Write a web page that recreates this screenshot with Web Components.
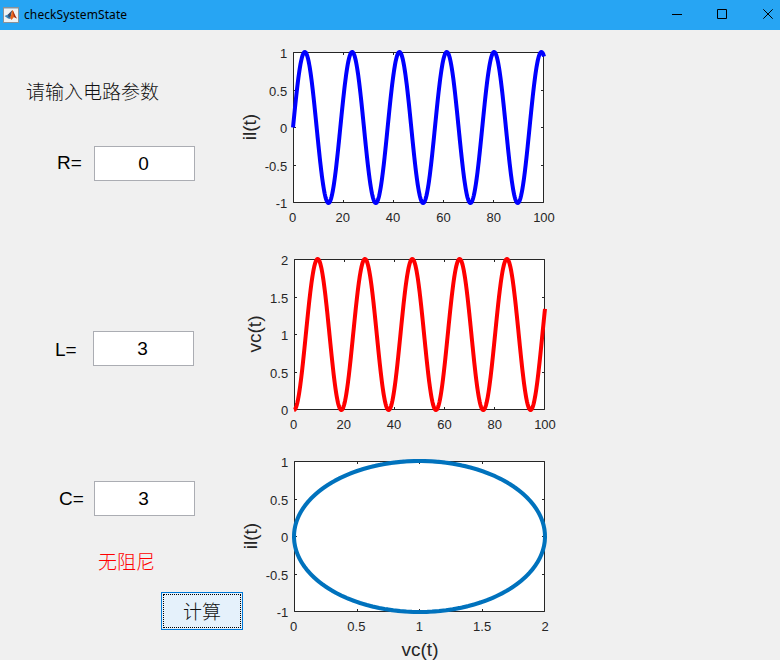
<!DOCTYPE html>
<html lang="zh-CN">
<head>
<meta charset="utf-8">
<title>checkSystemState</title>
<style>
html,body{margin:0;height:100%;overflow:hidden;background:#f0f0f0}
body{font-family:"Liberation Sans","Noto Sans CJK SC",sans-serif;color:#000}
</style>
</head>
<body>
<app-window></app-window>
<script>
class TitleBar extends HTMLElement {
  constructor() {
    super();
    this.attachShadow({mode:'open'}).innerHTML = `
    <style>
      :host{display:flex;align-items:center;height:30px;background:#27a5f3;box-sizing:border-box;padding:0 7px 0 3px}
      .name{font:12px/18px "Noto Sans",sans-serif;letter-spacing:.1px;margin-left:5px;flex:1;white-space:nowrap}
      .buttons{display:flex;gap:35px;margin-top:-2px}
      .buttons svg:last-child{margin-left:1px}
      svg{display:block}
    </style>
    <svg width="16" height="16" viewBox="0 0 16 16" style="margin-top:-1px">
      <rect x=".5" y=".5" width="15" height="15" fill="#f0f2f4" stroke="#8a9298"/>
      <path d="M1 1.500h14" stroke="#b9c4cc"/>
      <path d="M1.500 9l3.500-1.500 2-1 2 4-2 1.500-2-.5z" fill="#3b86bd"/>
      <path d="M5 7.500L9.400 3l-1.600 6-2 2z" fill="#3d4a66"/>
      <path d="M9.400 3c1.500 1.500 2.300 6 4.600 8.500L11 10l-2.500 3-1.500-2.500C8.500 9 8.500 4 9.400 3z" fill="#e8651c"/>
      <path d="M9.700 3.500c1.300 2 2.300 5.500 4.300 8L11 10z" fill="#9d2a16"/>
    </svg>
    <span class="name"><slot></slot></span>
    <span class="buttons">
      <svg width="10" height="10"><path d="M0 5.500h10" stroke="#000"/></svg>
      <svg width="10" height="10"><path d="M.5.5h9v9h-9z" fill="none" stroke="#000"/></svg>
      <svg width="10" height="10"><path d="M.3.300l9.400 9.400M9.700.300L.300 9.700" stroke="#000"/></svg>
    </span>`;
  }
}
customElements.define('title-bar', TitleBar);

class ParamField extends HTMLElement {
  constructor() {
    super();
    this.attachShadow({mode:'open'}).innerHTML = `
    <style>
      :host{display:flex;height:35px;font-size:19px;line-height:33px}
      .label{flex:none;width:var(--label-width);padding-top:var(--label-shift,0px);box-sizing:border-box}
      .box{width:101px;height:35px;box-sizing:border-box;border:1px solid #abadb3;background:#fff;text-align:center;padding-right:2px}
    </style>
    <span class="label">${this.getAttribute('label')}</span>
    <span class="box"><slot></slot></span>`;
  }
}
customElements.define('param-field', ParamField);

class PushButton extends HTMLElement {
  constructor() {
    super();
    this.attachShadow({mode:'open'}).innerHTML = `
    <style>
      :host{display:block;box-sizing:border-box;width:82px;height:38px;border:1px solid #0078d7;background:#e5f1fb;padding:1px}
      .focus{display:block;height:34px;box-sizing:border-box;border:1px dotted #000;text-align:center;font:300 19px/32px "Noto Sans CJK SC",sans-serif;color:#111}
    </style>
    <span class="focus"><slot></slot></span>`;
  }
}
customElements.define('push-button', PushButton);

class AxesPlot extends HTMLElement {
  constructor() {
    super();
    const kind = this.getAttribute('kind');
    const xs = this.getAttribute('xticks').split(' ');
    const ys = this.getAttribute('yticks').split(' ');
    const L = 58.5, T = 22.5, W = 250, H = 150;
    const ylx = Number(this.getAttribute('label-x'));
    const ylc = Number(this.getAttribute('label-y'));
    let ticks = '', texts = '';
    xs.forEach((t, i) => {
      const f = i / (xs.length - 1), x = L + Math.round(W * f);
      ticks += `M${x} ${T}v2.500M${x} ${T + H}v-2.500`;
      texts += `<text x="${L - 1 + (W + 1.500) * f}" y="192" text-anchor="middle">${t}</text>`;
    });
    ys.forEach((t, i) => {
      const y = T + Math.round(H * i / (ys.length - 1));
      ticks += `M${L} ${y}h2.500M${L + W} ${y}h-2.500`;
      texts += `<text x="52.200" y="${y + 5.500}" text-anchor="end">${t}</text>`;
    });
    // The curve spans the outer pixel edges of the axes box.
    const l = L - .5, t0 = T - .5, w = W + 1, h = H + 1;
    const p = [];
    for (let n = 0; n <= 600; n++) {
      const t = n / 6, a = t / 3;
      let x = l + w * t / 100, y;
      if (kind === 'voltage') y = t0 + h - h / 2 * (1 - Math.cos(a));
      else y = t0 + h / 2 - h / 2 * Math.sin(a);
      if (kind === 'phase') x = l + w / 2 * (1 - Math.cos(a));
      p.push(x.toFixed(2) + ',' + y.toFixed(2));
    }
    const xl = this.getAttribute('xlabel');
    this.attachShadow({mode:'open'}).innerHTML = `
    <style>
      :host{display:block;height:var(--plot-height)}
      svg{display:block;overflow:visible}
      text{font:13px "Liberation Sans",sans-serif;fill:#262626}
      .axis{font-size:19px}
    </style>
    <svg width="330" height="200">
      <path d="M${L} ${T}h${W}v${H}h-${W}z" fill="#fff" stroke="#262626"/>
      <path d="${ticks}" stroke="#262626"/>
      <polyline points="${p.join(' ')}" fill="none" stroke="${this.getAttribute('color')}" stroke-width="4" stroke-linejoin="round"/>
      ${texts}
      <text class="axis" text-anchor="middle" transform="translate(${ylx} ${ylc}) rotate(-90)">${this.getAttribute('ylabel')}</text>
      ${xl ? `<text class="axis" x="184" y="217" text-anchor="middle">${xl}</text>` : ''}
    </svg>`;
  }
}
customElements.define('axes-plot', AxesPlot);

class AppWindow extends HTMLElement {
  constructor() {
    super();
    this.attachShadow({mode:'open'}).innerHTML = `
    <style>
      :host{display:flex;flex-direction:column;height:660px;width:780px;background:#f0f0f0;overflow:hidden}
      main{display:grid;grid-template-columns:235px 1fr;flex:1;min-height:0}
      .form{display:flex;flex-direction:column;align-items:flex-start}
      .cjk{font:300 19px/28px "Noto Sans CJK SC",sans-serif;white-space:nowrap}
      .prompt{margin:47px 0 0 26px;color:#111}
      .r{margin:41px 0 0 57px;--label-width:37px}
      .l{margin:150px 0 0 55px;--label-width:38px;--label-shift:2px}
      .c{margin:115px 0 0 59px;--label-width:35px;--label-shift:1px}
      .status{margin:31px 0 0 98px;color:#f00}
      push-button{margin:17px 0 0 161px}
      .plots{display:flex;flex-direction:column}
    </style>
    <title-bar>checkSystemState</title-bar>
    <main>
      <section class="form">
        <div class="cjk prompt">请输入电路参数</div>
        <param-field class="r" label="R=">0</param-field>
        <param-field class="l" label="L=">3</param-field>
        <param-field class="c" label="C=">3</param-field>
        <div class="cjk status">无阻尼</div>
        <push-button>计算</push-button>
      </section>
      <section class="plots">
        <axes-plot style="--plot-height:207px" kind="current" color="#0000ff" ylabel="il(t)" label-x="21" label-y="97" xticks="0 20 40 60 80 100" yticks="1 0.5 0 -0.5 -1"></axes-plot>
        <axes-plot style="--plot-height:202px;margin-left:1px" kind="voltage" color="#ff0000" ylabel="vc(t)" label-x="25" label-y="97" xticks="0 20 40 60 80 100" yticks="2 1.5 1 0.5 0"></axes-plot>
        <axes-plot style="--plot-height:221px;margin-left:1px" kind="phase" color="#0072bd" ylabel="il(t)" xlabel="vc(t)" label-x="21" label-y="97" xticks="0 0.5 1 1.5 2" yticks="1 0.5 0 -0.5 -1"></axes-plot>
      </section>
    </main>`;
  }
}
customElements.define('app-window', AppWindow);
</script>
</body>
</html>
